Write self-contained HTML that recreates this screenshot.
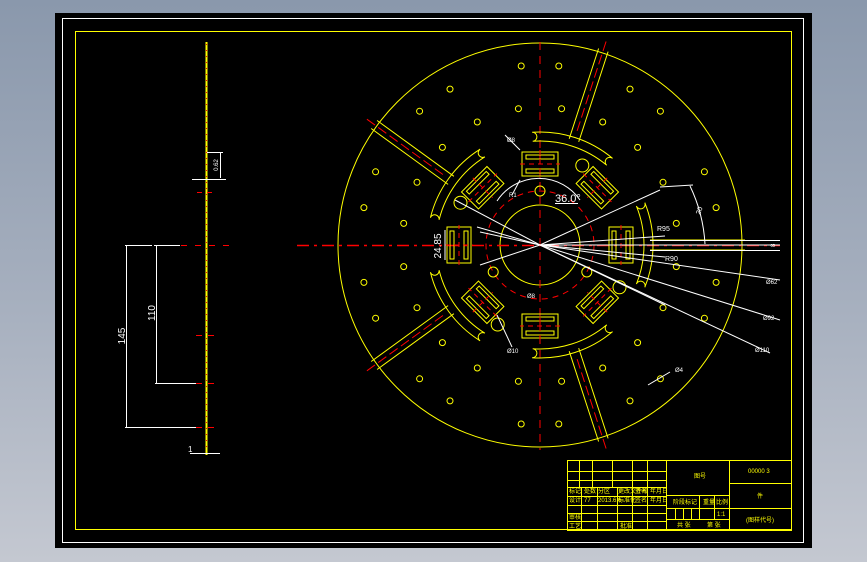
<!DOCTYPE html>
<html><head><meta charset="utf-8"><style>
html,body{margin:0;padding:0;width:867px;height:562px;overflow:hidden;background:linear-gradient(#8a98ac,#a7b0bf 55%,#c4c8d1);font-family:"Liberation Sans","Noto Sans CJK SC",sans-serif}
svg{position:absolute;left:0;top:0}
</style></head><body>
<svg id="s" width="867" height="562" viewBox="0 0 867 562">
<rect x="55" y="13" width="757" height="535" fill="#000"/>
<rect x="62.5" y="18.5" width="741" height="524" fill="none" stroke="#fff" stroke-width="1"/>
<rect x="75.5" y="31.5" width="716" height="498" fill="none" stroke="#ff0" stroke-width="1"/>
<line x1="206.5" y1="42" x2="206.5" y2="455" stroke="#ff0" stroke-width="2"/>
<line x1="206.5" y1="44" x2="206.5" y2="448" stroke="#f00" stroke-width="1" stroke-dasharray="1 5"/>
<g stroke="#fff" stroke-width="1" fill="none">
<line x1="125" y1="245.5" x2="152" y2="245.5"/><line x1="154" y1="245.5" x2="180" y2="245.5"/>
<line x1="155" y1="383.5" x2="196" y2="383.5"/><line x1="125" y1="427.5" x2="196" y2="427.5"/>
<line x1="126.5" y1="245" x2="126.5" y2="427"/><line x1="156.5" y1="245" x2="156.5" y2="383"/>
<line x1="190" y1="453.5" x2="220" y2="453.5"/>
<line x1="192" y1="179.5" x2="226" y2="179.5"/><line x1="207" y1="152.5" x2="223" y2="152.5"/><line x1="220.5" y1="153" x2="220.5" y2="178"/>
</g>
<g stroke="#f00" stroke-width="1">
<line x1="181" y1="245.5" x2="230" y2="245.5" stroke-dasharray="6 8"/>
<line x1="196" y1="335.5" x2="216" y2="335.5" stroke-dasharray="6 6"/>
<line x1="196" y1="383.5" x2="216" y2="383.5" stroke-dasharray="6 6"/>
<line x1="196" y1="427.5" x2="216" y2="427.5" stroke-dasharray="6 6"/>
<line x1="197" y1="192.5" x2="216" y2="192.5" stroke-dasharray="5 5"/>
</g>
<g fill="#fff" font-size="10">
<text transform="translate(125,336) rotate(-90)" text-anchor="middle">145</text>
<text transform="translate(155,313) rotate(-90)" text-anchor="middle">110</text>
<text x="188" y="452" font-size="8">1</text>
<text transform="translate(218,165) rotate(-90)" text-anchor="middle" font-size="6">0.62</text>
</g>
<g id="disc"></g>
<g stroke="#ff0" stroke-width="1" fill="none">
<rect x="567.5" y="460.5" width="224" height="70"/>
<line x1="666.5" y1="460" x2="666.5" y2="530"/><line x1="729.5" y1="460" x2="729.5" y2="530"/>
<line x1="729" y1="483.5" x2="792" y2="483.5"/><line x1="729" y1="508.5" x2="792" y2="508.5"/>
<line x1="666" y1="495.5" x2="729" y2="495.5"/><line x1="666" y1="508.5" x2="729" y2="508.5"/><line x1="666" y1="519.5" x2="729" y2="519.5"/>
<line x1="699.5" y1="495" x2="699.5" y2="519"/><line x1="714.5" y1="495" x2="714.5" y2="519"/>
<line x1="567" y1="471.5" x2="666" y2="471.5"/><line x1="567" y1="480.5" x2="666" y2="480.5"/><line x1="567" y1="487.5" x2="666" y2="487.5"/><line x1="567" y1="496.5" x2="666" y2="496.5"/><line x1="567" y1="505.5" x2="666" y2="505.5"/><line x1="567" y1="513.5" x2="666" y2="513.5"/><line x1="567" y1="521.5" x2="666" y2="521.5"/>
<line x1="579.5" y1="460" x2="579.5" y2="487"/><line x1="592.5" y1="460" x2="592.5" y2="487"/><line x1="612.5" y1="460" x2="612.5" y2="487"/><line x1="632.5" y1="460" x2="632.5" y2="487"/><line x1="647.5" y1="460" x2="647.5" y2="487"/>
<line x1="581.5" y1="487" x2="581.5" y2="530"/><line x1="597.5" y1="487" x2="597.5" y2="530"/><line x1="617.5" y1="487" x2="617.5" y2="530"/><line x1="632.5" y1="487" x2="632.5" y2="530"/><line x1="647.5" y1="487" x2="647.5" y2="530"/>
<line x1="675.5" y1="508" x2="675.5" y2="519"/><line x1="683.5" y1="508" x2="683.5" y2="519"/><line x1="691.5" y1="508" x2="691.5" y2="519"/>
</g>
<g fill="#ff0" font-size="6">
<text x="694" y="478">图号</text><text x="748" y="473">00000 3</text><text x="757" y="498">件</text><text x="746" y="522">(图样代号)</text>
<text x="673" y="504">阶段标记</text><text x="703" y="504">重量</text><text x="716" y="504">比例</text><text x="717" y="516">1:1</text>
<text x="677" y="527">共 张</text><text x="707" y="527">第 张</text>
<text x="569" y="493">标记</text><text x="584" y="493">处数</text><text x="598" y="493">分区</text><text x="618" y="493">更改文件号</text><text x="635" y="493">签名</text><text x="650" y="493">年月日</text>
<text x="569" y="502">设计</text><text x="584" y="502">77</text><text x="598" y="502">2013.6.6</text><text x="618" y="502">标准化</text><text x="635" y="502">签名</text><text x="650" y="502">年月日</text>
<text x="569" y="519">审核</text><text x="569" y="528">工艺</text><text x="620" y="528">批准</text>
</g>
</svg>
<script>
var g=document.getElementById('disc'),cx=540,cy=245,h='';
function P(r,a){a=a*Math.PI/180;return [cx+r*Math.cos(a),cy+r*Math.sin(a)];}
function f(n){return n.toFixed(1);}
var Y='stroke="#ff0" fill="none" stroke-width="1"';
h+='<circle cx="540" cy="245" r="202" '+Y+'/>';
h+='<circle cx="540" cy="245" r="40" '+Y+'/>';
h+='<circle cx="540" cy="245" r="54" stroke="#f00" fill="none" stroke-dasharray="6 5"/>';
h+='<line x1="540" y1="42" x2="540" y2="450" stroke="#f00" stroke-dasharray="8 6"/>';
h+='<line x1="297" y1="245.5" x2="780" y2="245.5" stroke="#f00" stroke-width="1.5" stroke-dasharray="12 5 3 5"/>';
var sl=[0,72,144,-144,-72];
sl.forEach(function(a){
 var t=a*Math.PI/180,nx=-Math.sin(t)*5,ny=Math.cos(t)*5;
 var p1=P(110,a),p2=P(205,a);
 h+='<line x1="'+f(p1[0]+nx)+'" y1="'+f(p1[1]+ny)+'" x2="'+f(p2[0]+nx)+'" y2="'+f(p2[1]+ny)+'" '+Y+'/>';
 h+='<line x1="'+f(p1[0]-nx)+'" y1="'+f(p1[1]-ny)+'" x2="'+f(p2[0]-nx)+'" y2="'+f(p2[1]-ny)+'" '+Y+'/>';
 var q=P(215,a),q0=P(120,a);
 h+='<line x1="'+f(q0[0])+'" y1="'+f(q0[1])+'" x2="'+f(q[0])+'" y2="'+f(q[1])+'" stroke="#f00" stroke-dasharray="10 4"/>';
 var a1=P(104,a-22),a2=P(104,a+22),b1=P(113,a-22),b2=P(113,a+22);
 h+='<path d="M'+f(a1[0])+' '+f(a1[1])+' A104 104 0 0 1 '+f(a2[0])+' '+f(a2[1])+' A4.5 4.5 0 0 1 '+f(b2[0])+' '+f(b2[1])+' A113 113 0 0 0 '+f(b1[0])+' '+f(b1[1])+' A4.5 4.5 0 0 1 '+f(a1[0])+' '+f(a1[1])+'" '+Y+'/>';
});
for(var i=0;i<8;i++){
 var a=i*45,c=P(81,a);
 h+='<g transform="translate('+f(c[0])+','+f(c[1])+') rotate('+(a+90)+')"><rect x="-18" y="-12" width="36" height="24" '+Y+'/><rect x="-14" y="-9" width="28" height="4" '+Y+' stroke-width="1.5"/><rect x="-14" y="5" width="28" height="4" '+Y+' stroke-width="1.5"/><line x1="-20" y1="0" x2="20" y2="0" stroke="#f00" stroke-dasharray="5 4"/><line x1="0" y1="-14" x2="0" y2="14" stroke="#f00" stroke-dasharray="5 4"/></g>';
}
function dist(a,b){return Math.abs(((a-b)%360+540)%360-180);}
function near(a,d){for(var k=0;k<sl.length;k++){if(dist(a,sl[k])<d||dist(a,sl[k]+36)<5)return true;}return false;}
for(var a=12;a<372;a+=12){if(!near(a,8)){var p=P(180,a);h+='<circle cx="'+f(p[0])+'" cy="'+f(p[1])+'" r="3" '+Y+'/>';}}
for(var a=9;a<360;a+=18){if(!near(a,8)){var p=P(138,a);h+='<circle cx="'+f(p[0])+'" cy="'+f(p[1])+'" r="3" '+Y+'/>';}}
[28,118,-62,-152].forEach(function(a){var p=P(90,a);h+='<circle cx="'+f(p[0])+'" cy="'+f(p[1])+'" r="6.5" '+Y+'/>';});
[-90,30,150].forEach(function(a){var p=P(54,a);h+='<circle cx="'+f(p[0])+'" cy="'+f(p[1])+'" r="5" '+Y+'/>';});
var W='stroke="#fff" stroke-width="1" fill="none"';
[[455,200],[477,227],[480,232],[780,245],[780,280],[780,320],[770,353],[665,305],[665,257],[665,236],[480,265],[660,190]].forEach(function(p){h+='<line x1="540" y1="245" x2="'+p[0]+'" y2="'+p[1]+'" '+W+'/>';});
h+='<line x1="660" y1="187" x2="693" y2="185" '+W+'/><path d="M690 186 A153 153 0 0 1 705 244" '+W+'/>';
h+='<line x1="650" y1="240.5" x2="780" y2="240.5" '+W+'/><line x1="650" y1="250.5" x2="780" y2="250.5" '+W+'/>';
h+='<path d="M497 201 A50 50 0 0 1 580 200" '+W+'/><line x1="555" y1="203.5" x2="578" y2="203.5" '+W+'/>';
h+='<line x1="505" y1="135" x2="520" y2="150" '+W+'/><line x1="520" y1="180" x2="512" y2="195" '+W+'/><line x1="497" y1="315" x2="512" y2="347" '+W+'/><line x1="648" y1="385" x2="670" y2="372" '+W+'/>';
h+='<line x1="445" y1="230" x2="445" y2="260" '+W+'/>';
var T='fill="#fff" font-family="Liberation Sans,sans-serif"';
h+='<text x="555" y="202" '+T+' font-size="11">36.0°</text>';
h+='<text transform="translate(441,246) rotate(-90)" text-anchor="middle" '+T+' font-size="10">24.85</text>';
h+='<text x="657" y="231" '+T+' font-size="7">R95</text><text x="665" y="261" '+T+' font-size="7">R90</text>';
h+='<text x="766" y="284" '+T+' font-size="6">Ø62</text><text x="763" y="320" '+T+' font-size="6">Ø92</text><text x="755" y="352" '+T+' font-size="6">Ø110</text>';
h+='<text transform="translate(700,215) rotate(-70)" '+T+' font-size="7">20</text><text transform="translate(775,247) rotate(-90)" '+T+' font-size="6">8</text>';
h+='<text x="527" y="298" '+T+' font-size="6">Ø8</text><text x="507" y="142" '+T+' font-size="6">Ø8</text><text x="509" y="197" '+T+' font-size="6">R1</text><text x="507" y="353" '+T+' font-size="6">Ø10</text><text x="675" y="372" '+T+' font-size="6">Ø4</text>';
g.innerHTML=h;
</script>
</body></html>
